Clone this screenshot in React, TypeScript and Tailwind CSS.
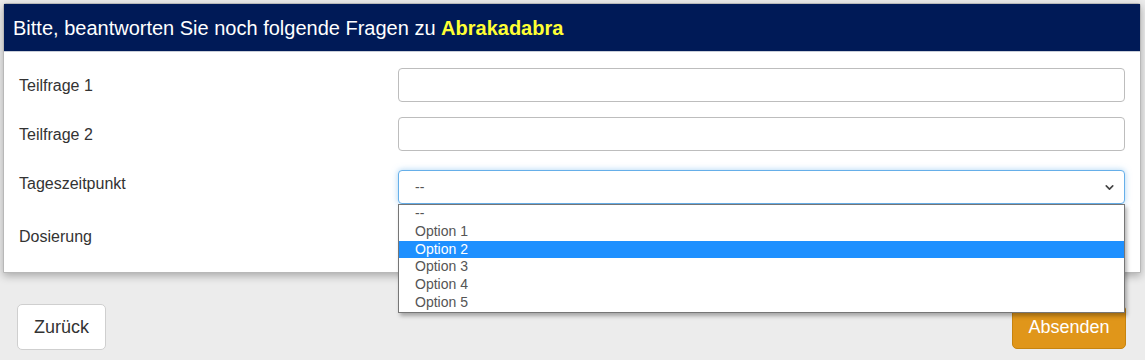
import { ChevronDown } from "lucide-react";

const options = ["--", "Option 1", "Option 2", "Option 3", "Option 4", "Option 5"];

function Cursor() {
  return (
    <svg
      className="absolute left-[608px] top-[240px] pointer-events-none"
      width="14"
      height="20"
      viewBox="0 0 14 20"
    >
      <path
        d="M1 1 L1 16 L4.5 12.5 L7 18.5 L9.3 17.5 L6.8 11.8 L11.5 11.8 Z"
        fill="#fff"
        stroke="#000"
        strokeWidth="1"
        strokeLinejoin="round"
      />
    </svg>
  );
}

export default function App() {
  const font = { fontFamily: '"Liberation Sans", Arial, sans-serif' };

  return (
    <main
      className="relative w-full h-[360px] overflow-hidden bg-[#ececec] pt-[3px] px-[3px]"
      style={font}
    >
      {/* Panel */}
      <section className="w-[1138px] bg-white border border-[#b8b8b8] rounded-t-[3px] shadow-[0_3px_8px_rgba(0,0,0,0.28)]">
        <header className="h-[48px] bg-[#001a57] border-b border-[#c9ced8] flex items-center px-[9px] text-[20px] text-white">
          Bitte, beantworten Sie noch folgende Fragen zu&nbsp;
          <span className="font-bold text-[#ffff33]">Abrakadabra</span>
        </header>

        <div className="pl-[15px] pr-[15px] pt-[16px] pb-[16px] text-[16px] text-[#333]">
          {/* Teilfrage 1 */}
          <div className="grid grid-cols-[379px_1fr]">
            <label className="pt-[8px] leading-[20px]">Teilfrage 1</label>
            <div className="h-[34px] rounded-[4px] border border-[#bdbdbd] bg-white" />
          </div>

          {/* Teilfrage 2 */}
          <div className="grid grid-cols-[379px_1fr] mt-[15px]">
            <label className="pt-[8px] leading-[20px]">Teilfrage 2</label>
            <div className="h-[34px] rounded-[4px] border border-[#bdbdbd] bg-white" />
          </div>

          {/* Tageszeitpunkt */}
          <div className="grid grid-cols-[379px_1fr] mt-[19px]">
            <label className="pt-[4px] leading-[20px]">Tageszeitpunkt</label>
            <div className="relative z-10">
              <div className="h-[34px] rounded-[4px] border border-[#66afe9] shadow-[0_0_6px_rgba(102,175,233,0.55)] bg-white flex items-center justify-between pl-[16px] pr-[8px] text-[14px] text-[#555]">
                <span>--</span>
                <ChevronDown size={13} strokeWidth={3} className="text-[#444]" />
              </div>
              {/* open dropdown list */}
              <ul className="absolute left-0 top-[34px] w-[727px] bg-white border border-[#767676] shadow-[2px_3px_4px_rgba(0,0,0,0.3)] text-[14px] text-[#555]">
                {options.map((o) => (
                  <li
                    key={o}
                    className={`h-[17.8px] leading-[17.8px] pl-[16px] ${
                      o === "Option 2" ? "bg-[#1e90ff] text-white" : ""
                    }`}
                  >
                    {o}
                  </li>
                ))}
              </ul>
            </div>
          </div>

          {/* Dosierung */}
          <div className="grid grid-cols-[379px_1fr] mt-[18px]">
            <label className="pt-[5px] leading-[20px]">Dosierung</label>
            <div className="h-[34px] rounded-[4px] border border-[#bdbdbd] bg-white" />
          </div>
        </div>
      </section>

      {/* Footer buttons */}
      <div className="flex justify-between items-start pl-[14px] pr-[16px] mt-[31px] text-[18px]">
        <button className="w-[89px] h-[46px] rounded-[5px] border border-[#cfcfcf] bg-white text-[#333]">
          Zurück
        </button>
        <button className="w-[114px] h-[44px] mt-[1px] rounded-[5px] border border-[#c7840f] bg-[#e0961a] text-white">
          Absenden
        </button>
      </div>

      <Cursor />
    </main>
  );
}
